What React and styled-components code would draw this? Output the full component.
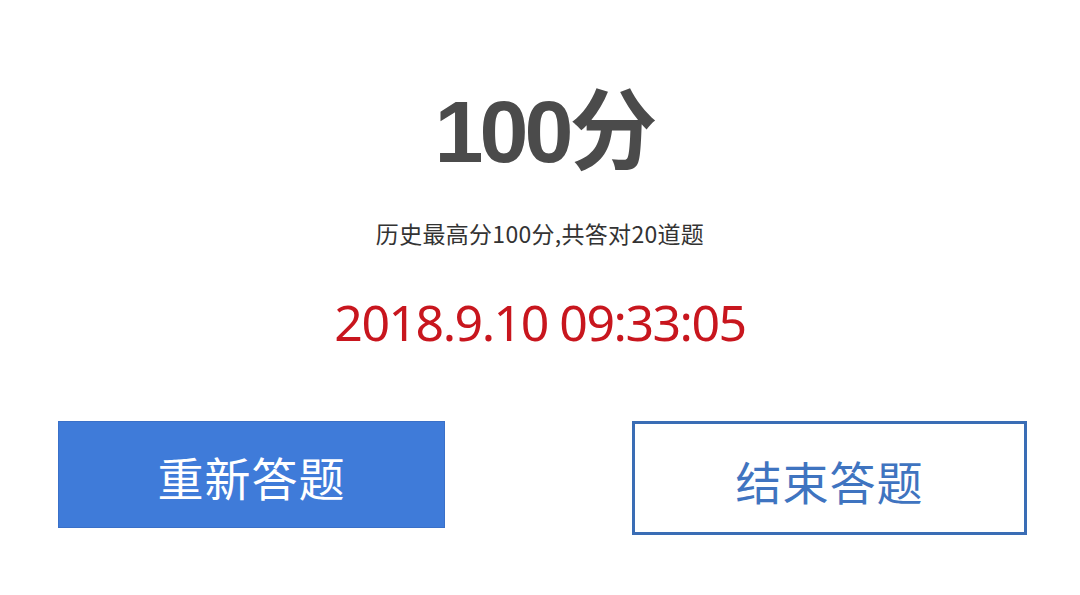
import styled, { createGlobalStyle } from "styled-components";

const GlobalStyle = createGlobalStyle`
  html, body {
    margin: 0;
    padding: 0;
    background: #ffffff;
  }
  body {
    font-family: "Noto Sans", "Noto Sans CJK SC", sans-serif;
  }
`;

const Page = styled.div`
  width: 1080px;
  height: 595px;
  display: flex;
  flex-direction: column;
  align-items: center;
  padding-top: 84px;
  box-sizing: border-box;
`;

const Score = styled.h1`
  margin: 0;
  font-family: "Liberation Sans", "Noto Sans CJK SC", sans-serif;
  font-size: 88px;
  line-height: 96px;
  font-weight: 700;
  letter-spacing: -4px;
  padding-left: 8px;
  color: #4b4b4b;
`;

const Summary = styled.p`
  margin: 38px 0 0;
  font-family: "Noto Sans CJK SC", sans-serif;
  font-size: 23px;
  line-height: 30px;
  letter-spacing: 0.3px;
  color: #333333;
`;

const DateTime = styled.div`
  margin-top: 42px;
  font-family: "Noto Sans", "Noto Sans CJK SC", sans-serif;
  font-size: 50px;
  line-height: 64px;
  letter-spacing: -1.5px;
  color: #c8161e;
`;

const Actions = styled.div`
  align-self: stretch;
  display: flex;
  justify-content: space-between;
  align-items: flex-start;
  padding: 0 53px 0 58px;
  margin-top: 67px;
`;

const Button = styled.button`
  box-sizing: border-box;
  width: ${(p) => (p.$outline ? "395px" : "387px")};
  height: ${(p) => (p.$outline ? "114px" : "107px")};
  display: flex;
  align-items: center;
  justify-content: center;
  font-family: "Noto Sans CJK SC", sans-serif;
  font-size: 46px;
  letter-spacing: 1px;
  cursor: pointer;
  background: ${(p) => (p.$outline ? "#ffffff" : "#3f7bd9")};
  color: ${(p) => (p.$outline ? "#3f74c0" : "#ffffff")};
  border: ${(p) => (p.$outline ? "3px solid #3a6db5" : "1px solid #3a70c8")};
  padding: ${(p) => (p.$outline ? "4px 0 0" : "2px 0 0")};
`;

export default function App() {
  return (
    <>
      <GlobalStyle />
      <Page>
        <Score>100分</Score>
        <Summary>历史最高分100分,共答对20道题</Summary>
        <DateTime>2018.9.10 09:33:05</DateTime>
        <Actions>
          <Button>重新答题</Button>
          <Button $outline>结束答题</Button>
        </Actions>
      </Page>
    </>
  );
}
